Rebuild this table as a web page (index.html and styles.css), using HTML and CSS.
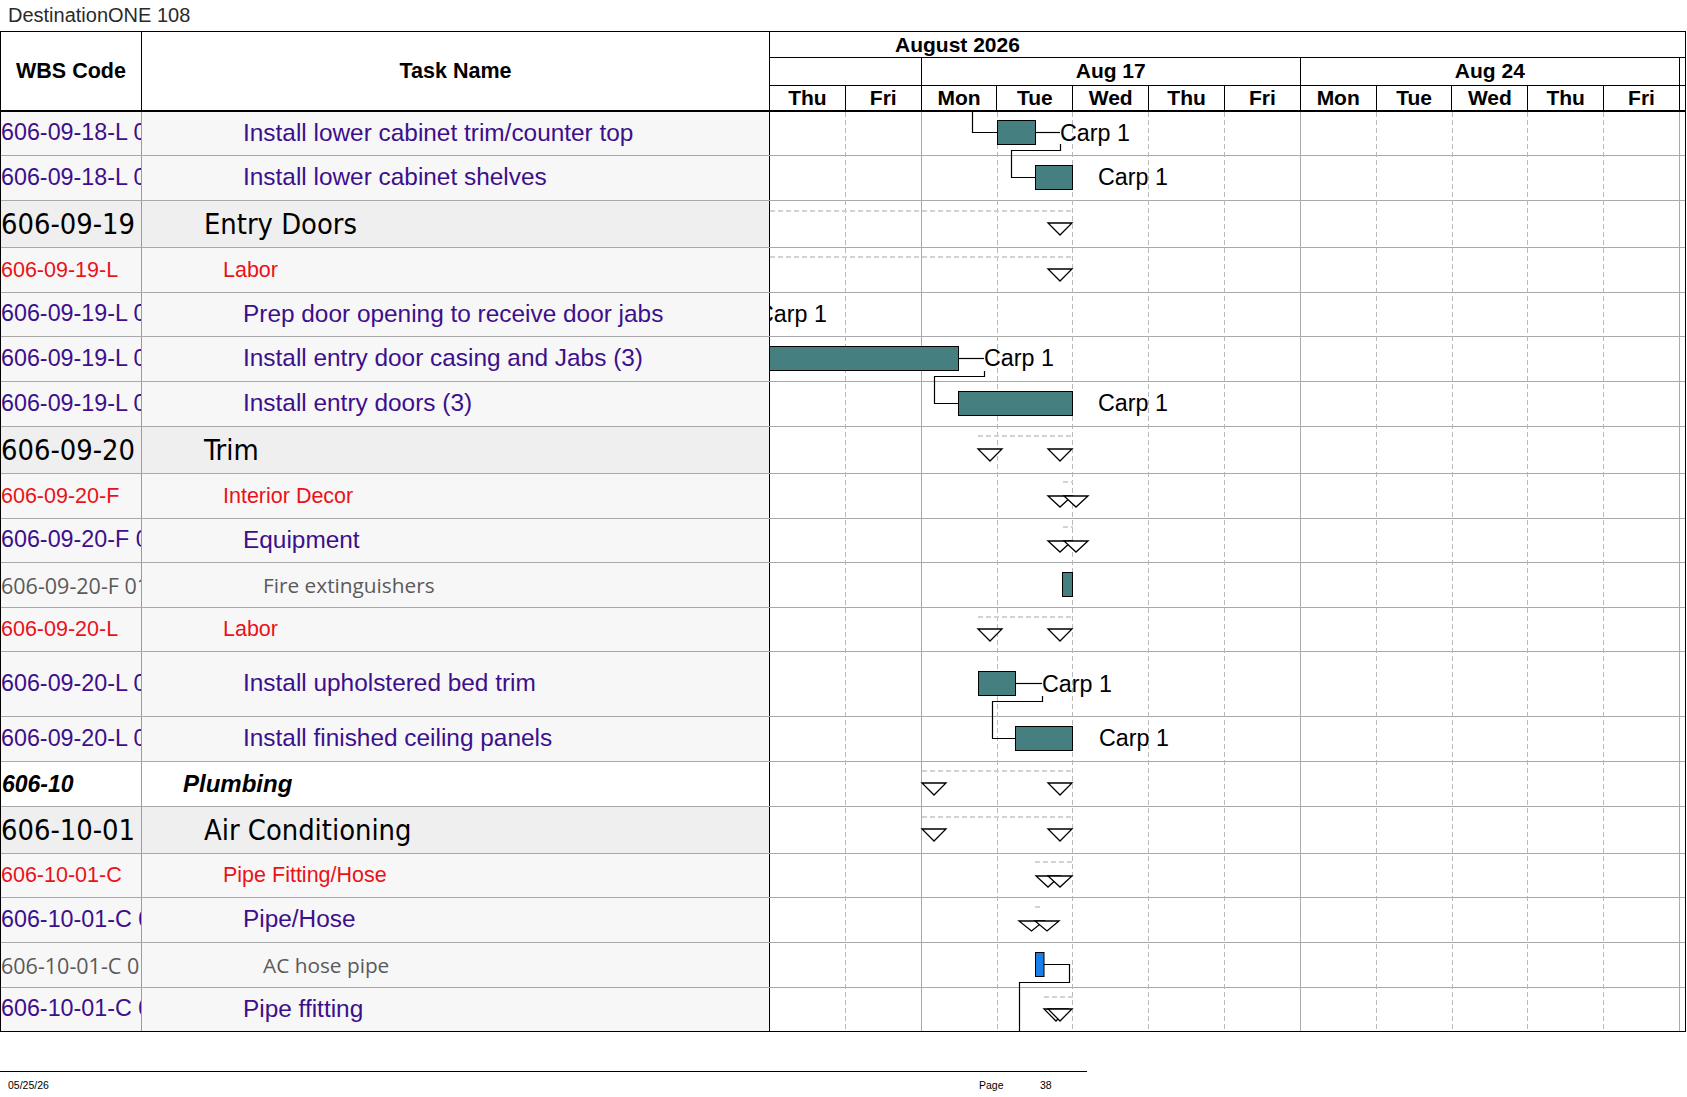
FILE: index.html
```html
<!DOCTYPE html>
<html>
<head>
<meta charset="utf-8">
<title>DestinationONE 108</title>
<link rel="stylesheet" href="styles.css">
</head>
<body>
<div class="doc-title">DestinationONE 108</div>
<div class="sheet">
  <div class="head">
    <div class="hcell">WBS Code</div>
    <div class="hcell">Task Name</div>
    <div class="htime">
      <div class="tl-month">August 2026</div>
      <div class="tl-weeks">
        <div class="wk wk2"></div>
        <div class="wk wk5">Aug 17</div>
        <div class="wk wk5">Aug 24</div>
        <div class="wk wk-rest"></div>
      </div>
      <div class="tl-days">
        <div class="day">Thu</div>
        <div class="day">Fri</div>
        <div class="day">Mon</div>
        <div class="day">Tue</div>
        <div class="day">Wed</div>
        <div class="day">Thu</div>
        <div class="day">Fri</div>
        <div class="day">Mon</div>
        <div class="day">Tue</div>
        <div class="day">Wed</div>
        <div class="day">Thu</div>
        <div class="day">Fri</div>
        <div class="day day-rest"></div>
      </div>
    </div>
  </div>

  <div class="body">
    <div class="row h44 purple"><div class="c-wbs">606-09-18-L 01</div><div class="c-name">Install lower cabinet trim/counter top</div><div class="c-chart"></div></div>
    <div class="row h45 purple"><div class="c-wbs">606-09-18-L 02</div><div class="c-name">Install lower cabinet shelves</div><div class="c-chart"></div></div>
    <div class="row h47 sum"><div class="c-wbs">606-09-19</div><div class="c-name">Entry Doors</div><div class="c-chart"></div></div>
    <div class="row h45 red"><div class="c-wbs">606-09-19-L</div><div class="c-name">Labor</div><div class="c-chart"></div></div>
    <div class="row h44 purple"><div class="c-wbs">606-09-19-L 01</div><div class="c-name">Prep door opening to receive door jabs</div><div class="c-chart"></div></div>
    <div class="row h45 purple"><div class="c-wbs">606-09-19-L 02</div><div class="c-name">Install entry door casing and Jabs (3)</div><div class="c-chart"></div></div>
    <div class="row h45 purple"><div class="c-wbs">606-09-19-L 03</div><div class="c-name">Install entry doors (3)</div><div class="c-chart"></div></div>
    <div class="row h47 sum"><div class="c-wbs">606-09-20</div><div class="c-name">Trim</div><div class="c-chart"></div></div>
    <div class="row h45 red"><div class="c-wbs">606-09-20-F</div><div class="c-name">Interior Decor</div><div class="c-chart"></div></div>
    <div class="row h44 purple"><div class="c-wbs">606-09-20-F 01</div><div class="c-name">Equipment</div><div class="c-chart"></div></div>
    <div class="row h45 gray"><div class="c-wbs">606-09-20-F 01.01</div><div class="c-name">Fire extinguishers</div><div class="c-chart"></div></div>
    <div class="row h44 red"><div class="c-wbs">606-09-20-L</div><div class="c-name">Labor</div><div class="c-chart"></div></div>
    <div class="row h65 purple"><div class="c-wbs">606-09-20-L 01</div><div class="c-name">Install upholstered bed trim</div><div class="c-chart"></div></div>
    <div class="row h45 purple"><div class="c-wbs">606-09-20-L 02</div><div class="c-name">Install finished ceiling panels</div><div class="c-chart"></div></div>
    <div class="row h45 grp"><div class="c-wbs">606-10</div><div class="c-name">Plumbing</div><div class="c-chart"></div></div>
    <div class="row h47 sum"><div class="c-wbs">606-10-01</div><div class="c-name">Air Conditioning</div><div class="c-chart"></div></div>
    <div class="row h44 red"><div class="c-wbs">606-10-01-C</div><div class="c-name">Pipe Fitting/Hose</div><div class="c-chart"></div></div>
    <div class="row h45 purple"><div class="c-wbs">606-10-01-C 01</div><div class="c-name">Pipe/Hose</div><div class="c-chart"></div></div>
    <div class="row h45 gray"><div class="c-wbs">606-10-01-C 01.01</div><div class="c-name">AC hose pipe</div><div class="c-chart"></div></div>
    <div class="row h44 purple row-last"><div class="c-wbs">606-10-01-C 02</div><div class="c-name">Pipe ffitting</div><div class="c-chart"></div></div>

    <svg class="gantt" width="915" height="920" viewBox="770 112 915 920" xmlns="http://www.w3.org/2000/svg">
      <g shape-rendering="crispEdges">
        <line class="gl-d" x1="845.3" y1="112" x2="845.3" y2="1031"/>
        <line class="gl-s" x1="921.2" y1="112" x2="921.2" y2="1031"/>
        <line class="gl-d" x1="997.0" y1="112" x2="997.0" y2="1031"/>
        <line class="gl-d" x1="1072.8" y1="112" x2="1072.8" y2="1031"/>
        <line class="gl-d" x1="1148.7" y1="112" x2="1148.7" y2="1031"/>
        <line class="gl-d" x1="1224.5" y1="112" x2="1224.5" y2="1031"/>
        <line class="gl-s" x1="1300.3" y1="112" x2="1300.3" y2="1031"/>
        <line class="gl-d" x1="1376.1" y1="112" x2="1376.1" y2="1031"/>
        <line class="gl-d" x1="1452.0" y1="112" x2="1452.0" y2="1031"/>
        <line class="gl-d" x1="1527.8" y1="112" x2="1527.8" y2="1031"/>
        <line class="gl-d" x1="1603.6" y1="112" x2="1603.6" y2="1031"/>
        <line class="gl-s" x1="1679.5" y1="112" x2="1679.5" y2="1031"/>
      </g>

      <g class="sumline">
        <line x1="770" y1="211" x2="1073" y2="211"/>
        <line x1="770" y1="257" x2="1073" y2="257"/>
        <line x1="978" y1="436" x2="1073" y2="436"/>
        <line x1="1063" y1="482" x2="1073" y2="482"/>
        <line x1="1063" y1="527" x2="1073" y2="527"/>
        <line x1="978" y1="617" x2="1073" y2="617"/>
        <line x1="922" y1="771" x2="1073" y2="771"/>
        <line x1="922" y1="817" x2="1073" y2="817"/>
        <line x1="1035" y1="862" x2="1073" y2="862"/>
        <line x1="1035" y1="907" x2="1043" y2="907"/>
        <line x1="1044" y1="997" x2="1073" y2="997"/>
      </g>

      <g class="ms">
        <polygon points="1048,223 1072,223 1060,235"/>
        <polygon points="1048,269 1072,269 1060,281"/>
        <polygon points="978,449 1002,449 990,461"/>
        <polygon points="1048,449 1072,449 1060,461"/>
        <polygon points="1048,496 1072,496 1060,507"/>
        <polygon points="1064,496 1088,496 1076,507"/>
        <polygon points="1048,541 1072,541 1060,552"/>
        <polygon points="1064,541 1088,541 1076,552"/>
        <polygon points="978,629 1002,629 990,641"/>
        <polygon points="1048,629 1072,629 1060,641"/>
        <polygon points="922,783 946,783 934,795"/>
        <polygon points="1048,783 1072,783 1060,795"/>
        <polygon points="922,829 946,829 934,841"/>
        <polygon points="1048,829 1072,829 1060,841"/>
        <polygon points="1036,876 1060,876 1048,887"/>
        <polygon points="1048,876 1072,876 1060,887"/>
        <polygon points="1019,921 1044,921 1031.5,931"/>
        <polygon points="1035,921 1059,921 1047,931"/>
        <polygon points="1044,1009 1068,1009 1056,1021"/>
        <polygon points="1048,1009 1072,1009 1060,1021"/>
      </g>

      <g class="links">
        <polyline points="972.5,110 972.5,132.5 997.5,132.5"/>
        <polyline points="1035.5,132.5 1060,132.5"/>
        <polyline points="1060.5,144 1060.5,150.5 1011.5,150.5 1011.5,177.5 1035.5,177.5"/>
        <polyline points="958.5,358.5 984,358.5"/>
        <polyline points="984.5,371 984.5,376.5 934.5,376.5 934.5,403.5 958.5,403.5"/>
        <polyline points="1015.5,683.5 1042,683.5"/>
        <polyline points="1042.5,696 1042.5,701.5 992.5,701.5 992.5,738.5 1015.5,738.5"/>
        <polyline points="1044,964.5 1069.5,964.5 1069.5,982.5 1019.5,982.5 1019.5,1035"/>
      </g>

      <g class="bars">
        <rect x="997.5" y="120.5" width="38" height="24"/>
        <rect x="1035.5" y="165.5" width="37" height="24"/>
        <rect x="765" y="346.5" width="193.5" height="24"/>
        <rect x="958.5" y="391.5" width="114" height="24"/>
        <rect x="1062.5" y="572.5" width="10" height="24"/>
        <rect x="978.5" y="671.5" width="37" height="24"/>
        <rect x="1015.5" y="726.5" width="57" height="24"/>
        <rect class="bar-blue" x="1035.5" y="952.5" width="8.5" height="24"/>
      </g>

      <g class="lbl">
        <text x="1060" y="140.5">Carp 1</text>
        <text x="1098" y="185">Carp 1</text>
        <text x="757" y="322">Carp 1</text>
        <text x="984" y="366">Carp 1</text>
        <text x="1098" y="411">Carp 1</text>
        <text x="1042" y="691.5">Carp 1</text>
        <text x="1099" y="746">Carp 1</text>
      </g>
    </svg>
  </div>
</div>

<div class="footer">
  <span class="f-date">05/25/26</span>
  <span class="f-page">Page</span>
  <span class="f-num">38</span>
</div>
</body>
</html>
```

FILE: styles.css
```css
* {
  box-sizing: border-box;
}

html,
body {
  margin: 0;
  padding: 0;
  background: #ffffff;
  overflow: hidden;
}

body {
  width: 1687px;
  height: 1097px;
  font-family: "Liberation Sans", Arial, sans-serif;
  color: #000000;
}

.doc-title {
  height: 31px;
  line-height: 31px;
  padding-left: 8px;
  font-size: 20px;
  color: #2a2a2a;
  white-space: nowrap;
}

.sheet {
  width: 1686px;
  border-top: 1px solid #000000;
  border-left: 1px solid #000000;
  border-right: 1px solid #000000;
}

/* ---------- header ---------- */
.head {
  display: grid;
  grid-template-columns: 141px 628px 915px;
  height: 80px;
  border-bottom: 2px solid #000000;
}

.hcell {
  display: flex;
  align-items: center;
  justify-content: center;
  font-weight: bold;
  font-size: 21.5px;
  border-right: 1px solid #000000;
}

.htime {
  display: flex;
  flex-direction: column;
}

.tl-month {
  height: 26px;
  border-bottom: 1px solid #000000;
  font-weight: bold;
  font-size: 21px;
  line-height: 25px;
  padding-left: 125px;
  white-space: nowrap;
}

.tl-weeks {
  height: 28px;
  display: flex;
  border-bottom: 1px solid #000000;
}

.wk {
  border-right: 1px solid #000000;
  font-weight: bold;
  font-size: 21px;
  line-height: 26px;
  text-align: center;
  white-space: nowrap;
}

.wk2 {
  flex: 0 0 151.66px;
}

.wk5 {
  flex: 0 0 379.15px;
}

.wk-rest {
  flex: 1 1 auto;
  border-right: 0;
}

.tl-days {
  height: 24px;
  display: flex;
}

.day {
  flex: 0 0 75.83px;
  border-right: 1px solid #000000;
  font-weight: bold;
  font-size: 21px;
  line-height: 24px;
  text-align: center;
}

.day-rest {
  flex: 1 1 auto;
  border-right: 0;
}

/* ---------- body rows ---------- */
.body {
  position: relative;
}

.row {
  display: grid;
  grid-template-columns: 141px 628px 915px;
  border-bottom: 1px solid #a9a9a9;
  background: #f7f7f7;
}

.row-last {
  border-bottom-color: #000000;
}

.h44 { height: 44px; }
.h45 { height: 45px; }
.h47 { height: 47px; }
.h65 { height: 65px; }

.c-wbs {
  display: flex;
  align-items: center;
  overflow: hidden;
  white-space: nowrap;
  border-right: 1px solid #9c9c9c;
}

.c-name {
  display: flex;
  align-items: center;
  overflow: hidden;
  white-space: nowrap;
  border-right: 1px solid #000000;
}

.c-chart {
  background: #ffffff;
}

/* purple task rows */
.purple .c-wbs,
.purple .c-name {
  color: #3d0f8c;
  padding-bottom: 2px;
}
.purple .c-wbs {
  font-size: 23.3px;
}
.purple .c-name {
  font-size: 24.4px;
  padding-left: 101px;
}

/* red resource group rows */
.red .c-wbs,
.red .c-name {
  color: #ea1218;
}
.red .c-wbs {
  font-size: 21.5px;
}
.red .c-name {
  font-size: 21.5px;
  padding-left: 81px;
}

/* gray item rows */
.gray .c-wbs,
.gray .c-name {
  color: #5a5a5a;
  font-family: "Open Sans", "Liberation Sans", sans-serif;
}
.gray .c-wbs {
  font-size: 21.5px;
}
.gray .c-name {
  font-size: 20.8px;
  padding-left: 121px;
}

/* summary rows */
.sum {
  background: #efefef;
}
.sum .c-wbs,
.sum .c-name {
  font-family: "DejaVu Sans Condensed", "Open Sans", sans-serif;
  font-size: 28.8px;
  color: #000000;
}
.sum .c-name {
  padding-left: 62px;
}

/* group row */
.grp {
  background: #ffffff;
}
.grp .c-wbs,
.grp .c-name {
  font-weight: bold;
  font-style: italic;
  color: #000000;
}
.grp .c-wbs {
  font-size: 23px;
  padding-left: 1px;
}
.grp .c-name {
  font-size: 24px;
  padding-left: 41px;
}

/* ---------- gantt overlay ---------- */
.gantt {
  position: absolute;
  left: 769px;
  top: 0;
  overflow: hidden;
}

.gl-d {
  stroke: #b9b9b9;
  stroke-width: 1;
  stroke-dasharray: 5 3;
}

.gl-s {
  stroke: #aaaaaa;
  stroke-width: 1;
}

.sumline line {
  stroke: #d2d2d2;
  stroke-width: 2;
  stroke-dasharray: 5 3;
}

.ms polygon {
  fill: #ffffff;
  stroke: #000000;
  stroke-width: 1.3;
  stroke-linejoin: miter;
}

.links polyline {
  fill: none;
  stroke: #000000;
  stroke-width: 1.2;
}

.bars rect {
  fill: #457f7f;
  stroke: #000000;
  stroke-width: 1;
}

.bars .bar-blue {
  fill: #1a7fe6;
}

.lbl text {
  font-family: "Liberation Sans", Arial, sans-serif;
  font-size: 23.3px;
  fill: #000000;
}

/* ---------- footer ---------- */
.footer {
  margin-top: 39px;
  width: 1087px;
  height: 26px;
  border-top: 1px solid #000000;
  display: grid;
  grid-template-columns: 979px 61px 1fr;
  padding-top: 7px;
  font-size: 10.5px;
  line-height: 13px;
  color: #000000;
}

.f-date {
  padding-left: 8px;
}
```
